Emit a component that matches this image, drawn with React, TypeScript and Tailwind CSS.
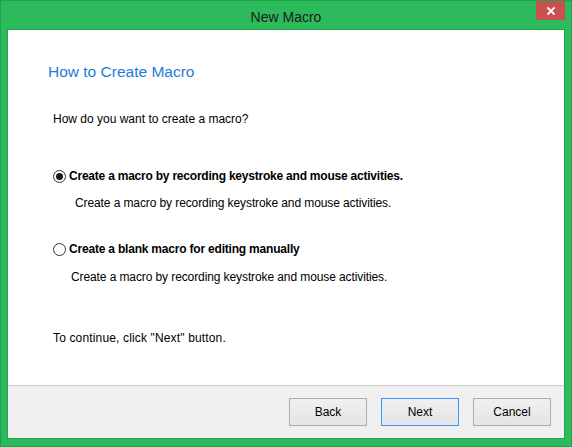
import React from "react";

const font = { fontFamily: '"Liberation Sans", Arial, sans-serif' };

function Radio({ checked }: { checked?: boolean }) {
  return (
    <span className="flex h-[13px] w-[13px] shrink-0 items-center justify-center rounded-full border border-[#333333] bg-white">
      {checked && <span className="block h-[7px] w-[7px] rounded-full bg-[#1a1a1a]" />}
    </span>
  );
}

function Btn({ label, focused }: { label: string; focused?: boolean }) {
  return (
    <button
      className={
        "flex h-[28px] w-[78px] items-center justify-center border bg-gradient-to-b from-[#f0f0f0] to-[#e5e5e5] text-[12px] leading-[16px] text-black " +
        (focused ? "border-[#3399ff]" : "border-[#adadad]")
      }
    >
      {label}
    </button>
  );
}

export default function App() {
  return (
    <div
      className="flex h-[447px] w-[572px] flex-col border border-[#21a04e] bg-[#2cbb5c]"
      style={font}
    >
      <div className="relative flex h-[28px] shrink-0 items-center justify-center">
        <span className="mt-[3px] text-[14px] leading-[18px] text-[#1c1c1c]">New Macro</span>
        <div className="absolute right-[6px] top-0 flex h-[19px] w-[29px] items-center justify-center bg-[#c75050]">
          <svg width="10" height="10" viewBox="0 0 10 10">
            <path d="M1.5 1.5 L8.5 8.5 M8.5 1.5 L1.5 8.5" stroke="#ffffff" strokeWidth="1.8" />
          </svg>
        </div>
      </div>
      <div className="mx-[6px] mb-[7px] flex flex-1 flex-col border border-[#24a452] bg-white">
        <div className="flex h-[355px] flex-col text-[12px] leading-[16px] text-black">
          <div className="ml-[40px] mt-[32px] text-[15.5px] leading-[20px] text-[#1f7bd8]">
            How to Create Macro
          </div>
          <div className="ml-[45px] mt-[29px]">How do you want to create a macro?</div>
          <div className="ml-[45px] mt-[41px] flex items-center gap-[3px]">
            <Radio checked />
            <span className="font-bold tracking-[-0.22px]">
              Create a macro by recording keystroke and mouse activities.
            </span>
          </div>
          <div className="ml-[67px] mt-[11px] tracking-[-0.1px]">
            Create a macro by recording keystroke and mouse activities.
          </div>
          <div className="ml-[45px] mt-[30px] flex items-center gap-[3px]">
            <Radio />
            <span className="font-bold tracking-[-0.2px]">Create a blank macro for editing manually</span>
          </div>
          <div className="ml-[63px] mt-[12px] tracking-[-0.1px]">
            Create a macro by recording keystroke and mouse activities.
          </div>
          <div className="ml-[45px] mt-[45px] tracking-[0.15px]">To continue, click "Next" button.</div>
        </div>
        <div className="flex flex-1 items-center justify-end gap-[14px] border-t border-[#cccccc] bg-[#f0f0f0] pr-[13px]">
          <Btn label="Back" />
          <Btn label="Next" focused />
          <Btn label="Cancel" />
        </div>
      </div>
    </div>
  );
}
